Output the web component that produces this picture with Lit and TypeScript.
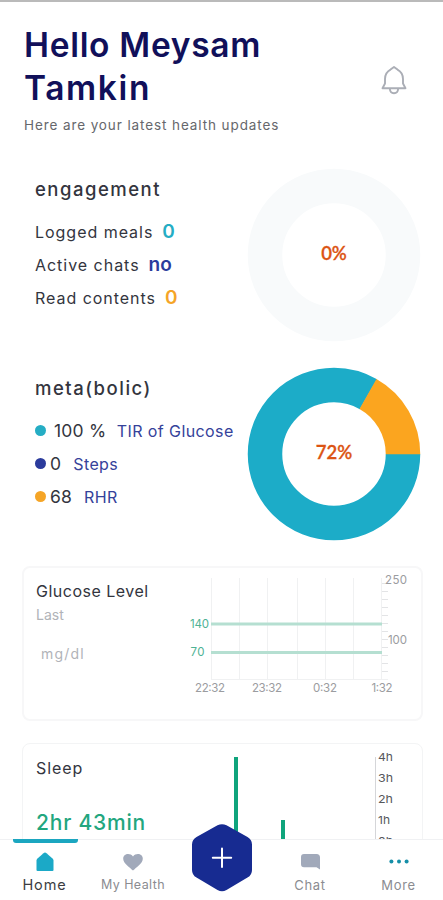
import { LitElement, html, svg, css } from "lit";
import { customElement, property } from "lit/decorators.js";

const RADIUS = 69;

@customElement("ring-chart")
class RingChart extends LitElement {
  @property() label = "";
  @property({ type: Boolean }) filled = false;

  static styles = css`
    :host { display: block; width: 174px; height: 174px; }
    svg { display: block; }
    circle { fill: none; stroke-width: 34.5px; }
    .track { stroke: #f8fafb; }
    .main { stroke: #1cacc8; }
    .part { stroke: #fba51f; }
    text { font: 600 18.5px Lato, "Noto Sans", sans-serif; fill: #dc5413; text-anchor: middle; stroke: #dc5413; stroke-width: 0.3px; }
  `;

  render() {
    const length = 2 * Math.PI * RADIUS;
    const part = length * (60.5 / 360);
    return html`<svg width="174" height="174" viewBox="0 0 174 174">
      ${this.filled
        ? svg`<circle class="main" cx="87" cy="87" r=${RADIUS} stroke-dasharray="${length - part} ${part}"></circle>
            <circle class="part" cx="87" cy="87" r=${RADIUS} stroke-dasharray="${part} ${length}" transform="rotate(-60.5 87 87)"></circle>`
        : svg`<circle class="track" cx="87" cy="87" r=${RADIUS}></circle>`}
      <text x="87" y="92">${this.label}</text>
    </svg>`;
  }
}

@customElement("glucose-chart")
class GlucoseChart extends LitElement {
  static styles = css`
    :host { display: block; }
    svg { display: block; font: 11.5px Inter, "Noto Sans", sans-serif; }
    .grid { stroke: #f0f1f2; stroke-width: 1px; }
    .tick { stroke: #e3e4e6; stroke-width: 1px; }
    .band { stroke: #b5dfd1; stroke-width: 3px; }
    .limit { fill: #4eb294; }
    .axis { fill: #9b9ca0; }
    .time { text-anchor: middle; }
  `;

  render() {
    const columns = [21.5, 49.5, 77.5, 107.5, 135.5, 163.5, 191.5];
    const ticks = [13, 21, 29, 37, 45, 53, 61, 69, 77, 85, 93, 101];
    const times: [number, string, number][] = [[20, "22:32", 30], [77, "23:32", 30], [135, "0:32", 24], [192, "1:32", 21]];
    return html`<svg width="230" height="125" viewBox="0 0 230 125">
      ${columns.map((x) => svg`<path class="grid" d="M${x} 8V109"></path>`)}
      <path class="grid" d="M21 109.5H198"></path>
      ${ticks.map((y) => svg`<path class="tick" d="M192 ${y + 0.5}h6"></path>`)}
      <path class="band" d="M21 54H192M21 82.5H192"></path>
      <text class="limit" x="0" y="58" textLength="19">140</text>
      <text class="limit" x="0.5" y="86" textLength="14">70</text>
      <text class="axis" x="195" y="14" textLength="22">250</text>
      <text class="axis" x="198" y="74" textLength="19">100</text>
      ${times.map(([x, label, w]) => svg`<text class="axis time" x=${x} y="122" textLength=${w}>${label}</text>`)}
    </svg>`;
  }
}

@customElement("sleep-chart")
class SleepChart extends LitElement {
  static styles = css`
    :host { display: block; }
    svg { display: block; font: 11px Inter, "Noto Sans", sans-serif; fill: #56575b; }
    .bar { fill: #0fa47c; }
    .rule { stroke: #d5d6d9; }
  `;

  render() {
    return html`<svg width="170" height="110" viewBox="0 0 170 110">
      <rect class="bar" x="4" y="13" width="4" height="87"></rect>
      <rect class="bar" x="51" y="76" width="4" height="24"></rect>
      <path class="rule" d="M145.5 13V100"></path>
      ${["4h", "3h", "2h", "1h", "0h"].map(
        (label, i) => svg`<text x="148" y=${17 + i * 21} textLength=${label === "1h" ? 12 : 15} lengthAdjust="spacingAndGlyphs">${label}</text>`,
      )}
    </svg>`;
  }
}

@customElement("tab-bar")
class TabBar extends LitElement {
  static styles = css`
    :host { display: grid; grid-template-columns: 89px 88px 89px 88px 89px; height: 61px; box-sizing: border-box; background: #fff; border-top: 1px solid #f0f1f3; }
    .tab { display: flex; flex-direction: column; align-items: center; color: #8b8c91; font-size: 12.5px; line-height: 18px; white-space: nowrap; }
    .tab svg { height: 28px; width: 30px; margin-top: 8px; }
    .home { color: #3c3d42; font-size: 14.5px; letter-spacing: 0.9px; }
    .home .line { width: 65px; height: 4px; border-radius: 0 0 3px 3px; background: #1ba6c0; margin: -1px 0 -3px 2px; }
    .health { letter-spacing: 0.4px; }
    .chat, .more { font-size: 13px; letter-spacing: 0.7px; }
    .add { display: flex; justify-content: center; }
    .add svg { flex: none; margin-top: -18px; width: 64px; height: 72px; }
  `;

  render() {
    return html`
      <div class="tab home">
        <span class="line"></span>
        <svg viewBox="0 0 30 28"><path fill="#1ba9c7" d="M15 4.500Q15.700 4.500 16.500 5.200L22.500 10.500Q23.500 11.500 23.500 12.500V22Q23.500 23 22.500 23H7.500Q6.500 23 6.500 22V12.500Q6.500 11.500 7.500 10.500L13.500 5.200Q14.300 4.500 15 4.500Z"></path></svg>
        <span>Home</span>
      </div>
      <div class="tab health">
        <svg viewBox="0 0 30 28"><path fill="#a1a9ba" d="M15 22.500C12 19.500 5.200 15.500 5.200 10.700C5.200 5.500 12 4.500 15 8.500C18 4.500 24.800 5.500 24.800 10.700C24.800 15.500 18 19.500 15 22.500Z"></path></svg>
        <span>My Health</span>
      </div>
      <div class="add">
        <svg viewBox="0 0 64 72"><path fill="#172b91" d="M27.500 3.300Q32 1 36.500 3.300L57.500 15Q62 17.600 62 22.600V48Q62 53 57.500 55.600L36.500 68Q32 70.500 27.500 68L6.500 55.600Q2 53 2 48V22.600Q2 17.600 6.500 15Z"></path><path d="M32 26.500V45M22.800 35.800H41.200" stroke="#fff" stroke-width="2" stroke-linecap="round"></path></svg>
      </div>
      <div class="tab chat">
        <svg viewBox="0 0 30 28"><path fill="#a1a9ba" d="M9 6H21.500Q25 6 25 9.500V21.500L21.500 19.300H9Q6 19.300 6 16.300V9Q6 6 9 6Z"></path></svg>
        <span>Chat</span>
      </div>
      <div class="tab more">
        <svg viewBox="0 0 30 28"><g fill="#168fa8"><circle cx="7.400" cy="13.500" r="2"></circle><circle cx="15" cy="13.500" r="2"></circle><circle cx="22.600" cy="13.500" r="2"></circle></g></svg>
        <span>More</span>
      </div>
    `;
  }
}

@customElement("app-root")
class AppRoot extends LitElement {
  static styles = css`
    :host { display: block; position: relative; box-sizing: border-box; height: 900px; overflow: hidden; background: #fff; border-top: 2px solid #bababa; font-family: Inter, "Noto Sans", sans-serif; color: #33353e; }
    header { display: flex; justify-content: space-between; height: 166px; padding: 22px 34px 0 24px; box-sizing: border-box; white-space: nowrap; }
    h1 { margin: 0; font-size: 33.5px; line-height: 43px; font-weight: 600; letter-spacing: 0.7px; color: #11105a; }
    .surname { letter-spacing: 1.6px; }
    .greeting { margin: 5px 0 0; font-size: 13.5px; line-height: 20px; letter-spacing: 0.9px; color: #66676c; }
    .bell { margin-top: 39px; width: 30px; height: 34px; }
    .panel { display: flex; justify-content: space-between; height: 199px; padding: 0 22px 0 35px; white-space: nowrap; }
    .info { padding-top: 9px; width: 211px; }
    h2 { margin: 0 0 14px; font-size: 18.5px; line-height: 24px; font-weight: 500; letter-spacing: 1.5px; }
    .row { display: flex; align-items: center; height: 33.2px; font-size: 16px; letter-spacing: 0.97px; }
    .count { margin-left: 9px; font-size: 19px; font-weight: 600; letter-spacing: 0.2px; }
    .teal { color: #25adc4; }
    .blue { color: #2b3b9c; }
    .amber { color: #f5a527; }
    .dot { flex: none; width: 11px; height: 11px; border-radius: 50%; background: currentColor; margin-right: 4px; }
    .value { font-size: 17.5px; margin-right: 12px; letter-spacing: 0.2px; }
    .wide { margin-left: 4px; margin-right: 10.5px; }
    .name { color: #35429a; letter-spacing: 0.4px; }
    .card { display: flex; justify-content: space-between; margin: 0 20px 0 22px; box-sizing: border-box; border: 2px solid #f7f7f8; border-radius: 8px; padding: 0 10px 0 12px; white-space: nowrap; }
    .glucose { height: 155px; }
    .sleep { height: 170px; margin-top: 22px; border-width: 1.5px; border-color: #f3f4f5; padding-left: 13px; }
    .card h3 { margin: 11px 0 0; font-size: 16px; line-height: 24px; font-weight: 400; letter-spacing: 0.5px; }
    .sleep h3 { margin-top: 12px; letter-spacing: 0.9px; }
    .muted { color: #b1b3b8; font-size: 14px; line-height: 24px; }
    .unit { margin: 15px 0 0 5px; letter-spacing: 1.2px; }
    .duration { margin-top: 29px; font-size: 21px; line-height: 28px; font-weight: 500; letter-spacing: 0.8px; color: #22a67e; }
    .glucose glucose-chart { margin: 2px -9px 0 0; }
    .sleep sleep-chart { margin-right: 12px; }
    tab-bar { position: absolute; left: 0; right: 0; bottom: 0; }
  `;

  render() {
    return html`
      <header>
        <div>
          <h1>Hello Meysam<br /><span class="surname">Tamkin</span></h1>
          <p class="greeting">Here are your latest health updates</p>
        </div>
        <svg class="bell" viewBox="0 0 30 34" fill="none" stroke="#abaeb6" stroke-width="1.900" stroke-linejoin="round" stroke-linecap="round">
          <path d="M15 4L18.500 6.600C22.500 8.800 24 12 24 16V20.500L26.500 25.200H3.500L6 20.500V16C6 12 7.500 8.800 11.500 6.600ZM10.800 25.500C11.200 31.800 18.800 31.800 19.200 25.500"></path>
        </svg>
      </header>
      <section class="panel">
        <div class="info">
          <h2>engagement</h2>
          <div class="row"><span>Logged meals</span><span class="count teal">0</span></div>
          <div class="row"><span>Active chats</span><span class="count blue">no</span></div>
          <div class="row"><span>Read contents</span><span class="count amber">0</span></div>
        </div>
        <ring-chart label="0%"></ring-chart>
      </section>
      <section class="panel">
        <div class="info">
          <h2>meta(bolic)</h2>
          <div class="row"><i class="dot teal"></i><span class="value wide">100 %</span><span class="name">TIR of Glucose</span></div>
          <div class="row"><i class="dot blue"></i><span class="value">0</span><span class="name">Steps</span></div>
          <div class="row"><i class="dot amber"></i><span class="value">68</span><span class="name">RHR</span></div>
        </div>
        <ring-chart label="72%" filled></ring-chart>
      </section>
      <section class="card glucose">
        <div>
          <h3>Glucose Level</h3>
          <div class="muted">Last</div>
          <div class="muted unit">mg/dl</div>
        </div>
        <glucose-chart></glucose-chart>
      </section>
      <section class="card sleep">
        <div>
          <h3>Sleep</h3>
          <div class="duration">2hr 43min</div>
        </div>
        <sleep-chart></sleep-chart>
      </section>
      <tab-bar></tab-bar>
    `;
  }
}
